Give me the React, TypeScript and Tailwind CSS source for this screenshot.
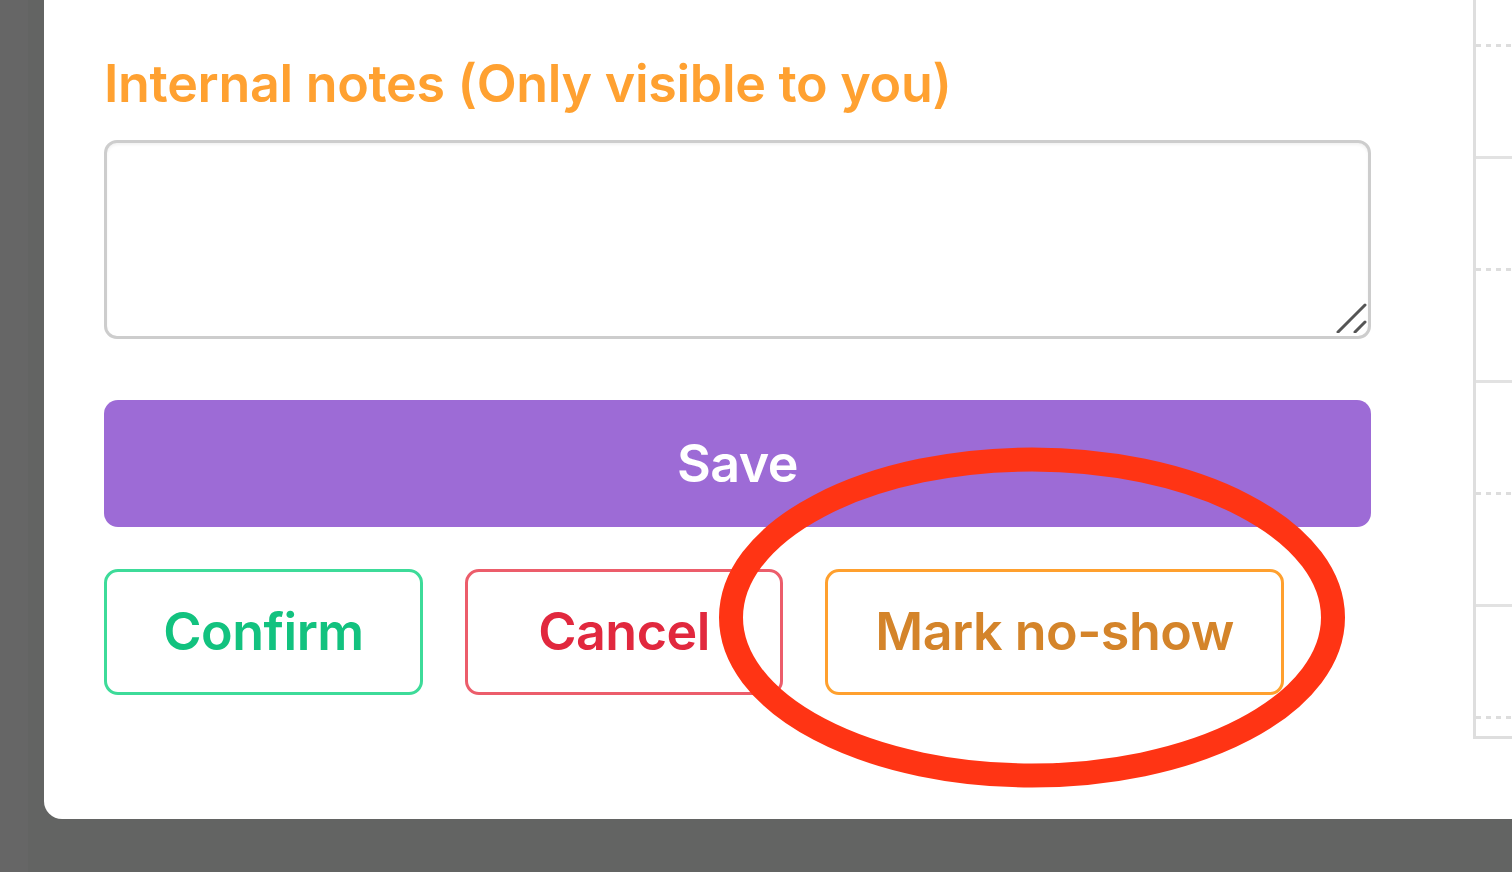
const font = { fontFamily: 'Inter, "Noto Sans", sans-serif' }

const dashed =
    'h-[3px] bg-[repeating-linear-gradient(to_right,#dddddd_0px,#dddddd_5px,transparent_5px,transparent_10px)]'

function DayColumn() {
    return (
        <div className="w-[39px] h-[739px] border-l-[3px] border-b-[3px] border-[#dedede] flex flex-col">
            <div className="h-[44px]" />
            <div className={dashed} />
            <div className="h-[109px]" />
            <div className="h-[3px] bg-[#e2e2e2]" />
            <div className="h-[109px]" />
            <div className={dashed} />
            <div className="h-[109px]" />
            <div className="h-[3px] bg-[#e2e2e2]" />
            <div className="h-[109px]" />
            <div className={dashed} />
            <div className="h-[109px]" />
            <div className="h-[3px] bg-[#e2e2e2]" />
            <div className="h-[109px]" />
            <div className={dashed} />
        </div>
    )
}

function OutlineButton({ label, width, border, text }: { label: string; width: string; border: string; text: string }) {
    return (
        <button className={`${width} ${border} ${text} h-[126px] rounded-[14px] border-[3px] bg-white text-[52px] font-semibold tracking-[-0.5px]`}>
            {label}
        </button>
    )
}

export default function App() {
    return (
        <div className="w-[1512px] h-[872px] flex overflow-hidden bg-[#636463]" style={font}>
            <div className="w-[28px] h-full bg-[#666666]" />
            <div className="flex-1 pl-[16px]">
                <div className="relative h-[819px] bg-white rounded-bl-[18px] flex">
                    <div className="w-[1327px] pl-[60px] pt-[52px] flex flex-col">
                        <label className="text-[#ffa131] text-[52px] font-semibold leading-[64px] tracking-[-0.3px]">
                            Internal notes (Only visible to you)
                        </label>
                        <div className="relative mt-[24px] w-[1267px] h-[199px]">
                            <textarea className="w-full h-full resize-none rounded-[13px] border-[3px] border-[#cdcdcd] shadow-[inset_0_2px_3px_rgba(0,0,0,0.05)] outline-none" />
                            <svg className="absolute right-[3px] bottom-[6px]" width="32" height="30" viewBox="0 0 32 30">
                                <path d="M2 29 L29 2" stroke="#555" strokeWidth="3" strokeLinecap="round" />
                                <path d="M19 29 L29 19" stroke="#555" strokeWidth="3" strokeLinecap="round" />
                            </svg>
                        </div>
                        <button className="mt-[61px] w-[1267px] h-[127px] rounded-[14px] bg-[#9d6bd6] text-white text-[52px] font-semibold tracking-[-0.5px]">
                            Save
                        </button>
                        <div className="mt-[42px] flex gap-[42px]">
                            <OutlineButton label="Confirm" width="w-[319px]" border="border-[#3ddb99]" text="text-[#12c27f]" />
                            <OutlineButton label="Cancel" width="w-[318px]" border="border-[#ec5d6b]" text="text-[#e1283e]" />
                            <OutlineButton label="Mark no-show" width="w-[459px]" border="border-[#ffa02e]" text="text-[#d4842a]" />
                        </div>
                    </div>
                    <div className="pl-[102px]">
                        <DayColumn />
                    </div>
                    <svg className="absolute left-[674px] top-[447px] pointer-events-none" width="628" height="341" viewBox="0 0 628 341">
                        <ellipse cx="314" cy="170.5" rx="301" ry="158" fill="none" stroke="#ff3414" strokeWidth="24" />
                    </svg>
                </div>
            </div>
        </div>
    )
}
